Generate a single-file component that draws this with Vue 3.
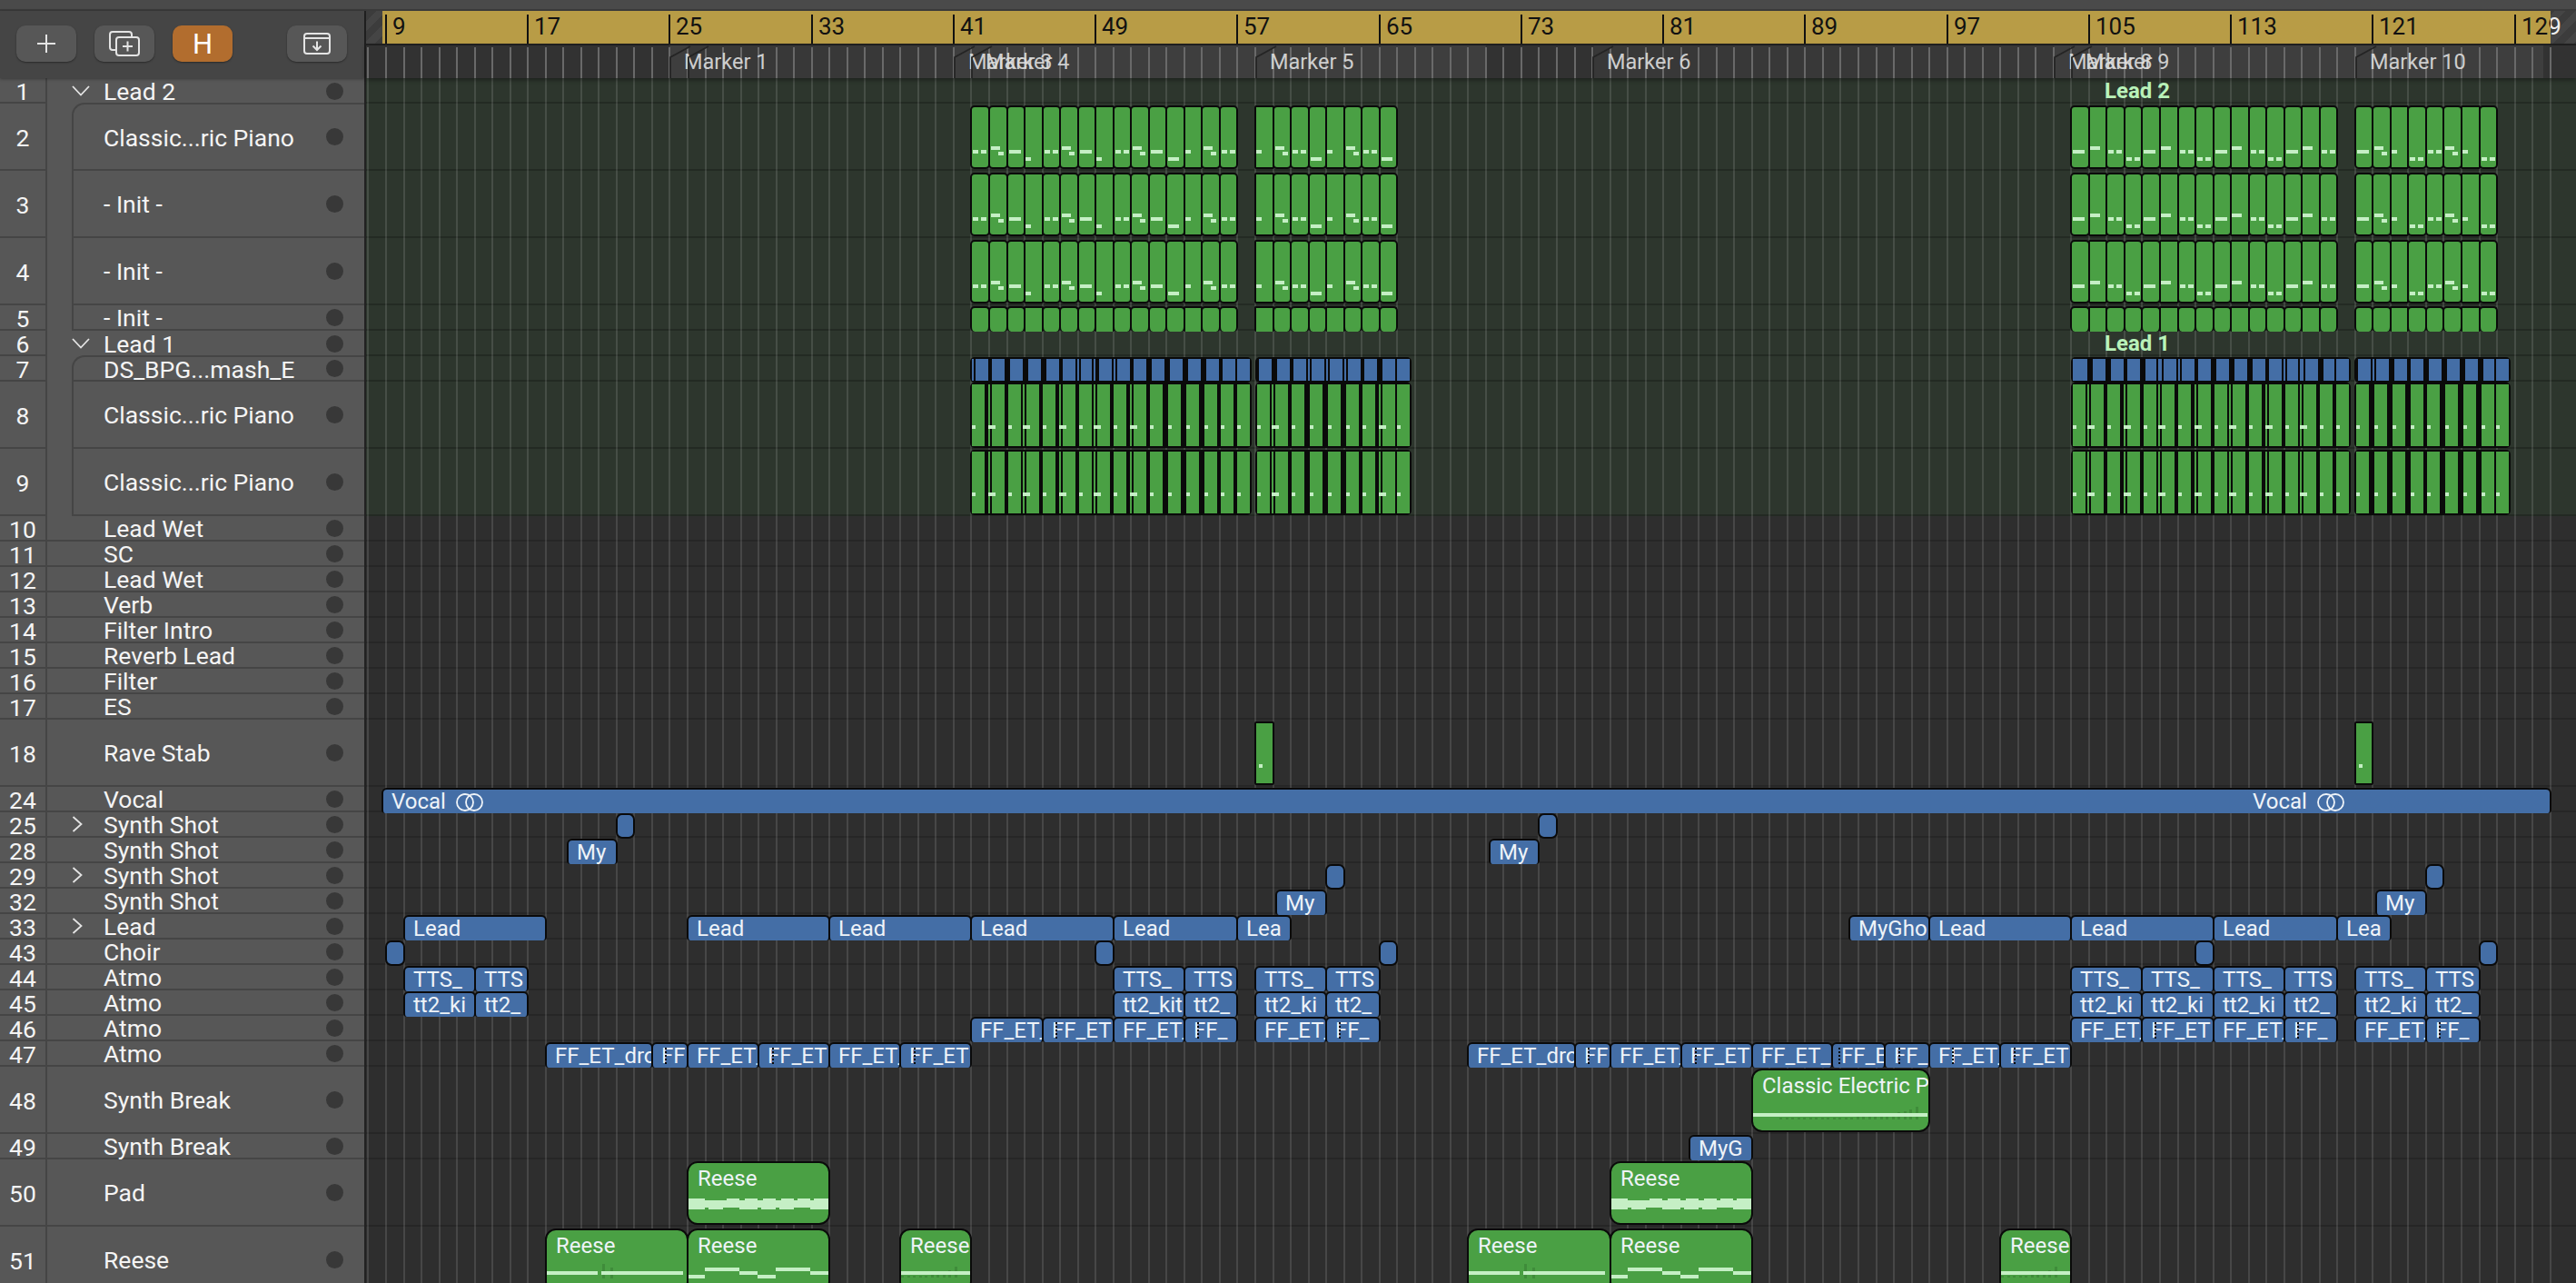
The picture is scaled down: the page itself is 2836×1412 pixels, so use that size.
<template>
  <div class="daw">
    <div class="topstrip"></div>
    <div class="main">
      <!-- track list -->
      <aside class="tracks">
        <div class="toolbar">
          <button class="tool">
            <svg width="22" height="22" viewBox="0 0 22 22"><path d="M11 1v20M1 11h20" class="ico" /></svg>
          </button>
          <button class="tool">
            <svg width="34" height="28" viewBox="0 0 34 28">
              <path d="M7 21H4a3 3 0 0 1-3-3V4a3 3 0 0 1 3-3h18a3 3 0 0 1 3 3v3" class="ico" />
              <rect x="8" y="7" width="25" height="20" rx="3" class="ico" />
              <path d="M20.500 11.500v11M15 17h11" class="ico" />
            </svg>
          </button>
          <button class="tool hide">H</button>
          <span class="toolgap"></span>
          <button class="tool">
            <svg width="30" height="24" viewBox="0 0 30 24">
              <rect x="1" y="1" width="28" height="22" rx="3" class="ico" />
              <path d="M1 6h28M15 9.500v9M10.500 14.500l4.500 4.500 4.500-4.500" class="ico" />
            </svg>
          </button>
        </div>
        <div
          v-for="t in tracks"
          :key="t.n"
          class="track"
          :class="{ big: t.h > 28 }"
        >
          <div class="num">{{ t.n }}</div>
          <div class="body" :class="t.kind">
            <div class="fold">
              <svg v-if="t.fold === 'open'" width="20" height="12" viewBox="0 0 20 12"><path d="M1 1l9 9.500L19 1" class="chev" /></svg>
              <svg v-if="t.fold === 'closed'" width="12" height="18" viewBox="0 0 12 18"><path d="M1.500 1l9 8-9 8" class="chev" /></svg>
            </div>
            <div class="name">{{ t.name }}</div>
            <div class="dot"></div>
          </div>
        </div>
      </aside>

      <section class="arrange">
        <!-- ruler -->
        <div class="ruler">
          <span class="barnum over" :style="{ left: X(129) + 7 - 403 + 'px' }">129</span>
          <div class="gold">
            <template v-for="b in rulerBars" :key="b">
              <i class="barline" :style="{ left: X(b) - 1 - 421 + 'px' }"></i>
              <span class="barnum" :style="{ left: X(b) + 7 - 421 + 'px' }">{{ b }}</span>
            </template>
          </div>
        </div>

        <!-- markers -->
        <div class="markers">
          <i
            v-for="s in markerSpans"
            :key="s[0]"
            class="mspan"
            :style="{ left: s[0] - 403 + 'px', width: s[1] - s[0] + 'px', background: s[2] }"
          ></i>
          <i v-for="b in gridBars" :key="b" class="tick" :style="{ left: X(b) - 1 - 403 + 'px' }"></i>
          <template v-for="m in markers" :key="m.b">
            <svg class="mflag" width="24" height="36" viewBox="0 0 24 36" :style="{ left: X(m.b) - 403 + 'px' }">
              <path d="M1 36V13L23 1" fill="none" stroke="#242424" stroke-width="1.800" />
            </svg>
            <span class="mname" :style="{ left: X(m.b) + 16 - 403 + 'px' }">{{ m.text }}</span>
          </template>
        </div>

        <!-- lanes with clips on top -->
        <div class="canvas">
          <div
            v-for="t in tracks"
            :key="t.n"
            class="lane"
            :class="{ tinted: t.n <= 9 }"
            :style="{ height: t.h + 'px' }"
          ></div>
          <i v-for="b in gridBars" :key="b" class="grid" :style="{ left: X(b) - 1 - 403 + 'px' }"></i>

          <span class="glabel" :style="{ left: 2317 - 403 + 'px', top: rowTop(1) + 'px' }">Lead 2</span>
          <span class="glabel" :style="{ left: 2317 - 403 + 'px', top: rowTop(6) + 'px' }">Lead 1</span>

          <!-- rows 7-9: packed loops read as black strips -->
          <div
            v-for="(s, i) in strips"
            :key="'s' + i"
            class="strip"
            :style="{ left: s.x - 403 + 'px', top: rowTop(s.n) + 1 + 'px', width: s.w + 'px', height: s.h + 'px' }"
          >
            <div
              v-for="(g, j) in s.segs"
              :key="j"
              class="seg"
              :style="{ left: g.x + 'px', width: g.w + 'px', background: s.color }"
            >
              <i v-if="s.note" class="snote"></i>
            </div>
          </div>

          <div
            v-for="(c, i) in clips"
            :key="i"
            class="clip"
            :class="[c.color, c.shape, { sq: c.sq }]"
            :style="{ left: c.x - 403 + 'px', top: c.y + 'px', width: c.w + 'px', height: c.h + 'px' }"
          >
            <i
              v-for="(k, j) in c.ticks"
              :key="'k' + j"
              class="cticks"
              :style="{ left: k.x + 'px', top: k.y + 'px', width: k.w + 'px', height: k.h + 'px' }"
            ></i>
            <i
              v-for="(n, j) in c.notes"
              :key="'n' + j"
              class="cnote"
              :style="{ left: n.x + 'px', top: n.y + 'px', width: n.w + 'px', height: n.h + 'px' }"
            ></i>
            <i v-if="c.dots !== undefined" class="cdots" :style="{ left: c.dots + 'px' }"></i>
            <span v-if="c.label" class="clabel">
              {{ c.label }}
              <svg v-if="c.loop" class="loop" width="30" height="20" viewBox="0 0 30 20">
                <circle cx="10" cy="10" r="9" /><circle cx="20" cy="10" r="9" />
              </svg>
            </span>
            <span v-if="c.loop" class="clabel second" :style="{ left: 2480 - c.x - 2 + 'px' }">
              {{ c.label }}
              <svg class="loop" width="30" height="20" viewBox="0 0 30 20">
                <circle cx="10" cy="10" r="9" /><circle cx="20" cy="10" r="9" />
              </svg>
            </span>
          </div>
        </div>
      </section>
    </div>
  </div>
</template>

<script setup>
const X = (bar) => Math.round(425 + 19.53 * (bar - 9))

const S = 28
const B = 74
const tracks = [
  { n: 1, name: 'Lead 2', h: S, kind: 'head', fold: 'open' },
  { n: 2, name: 'Classic...ric Piano', h: B, kind: 'inner first' },
  { n: 3, name: '- Init -', h: B, kind: 'inner' },
  { n: 4, name: '- Init -', h: B, kind: 'inner' },
  { n: 5, name: '- Init -', h: S, kind: 'inner' },
  { n: 6, name: 'Lead 1', h: S, kind: 'head', fold: 'open' },
  { n: 7, name: 'DS_BPG...mash_E', h: S, kind: 'inner first' },
  { n: 8, name: 'Classic...ric Piano', h: B, kind: 'inner' },
  { n: 9, name: 'Classic...ric Piano', h: B, kind: 'inner' },
  { n: 10, name: 'Lead Wet', h: S },
  { n: 11, name: 'SC', h: S },
  { n: 12, name: 'Lead Wet', h: S },
  { n: 13, name: 'Verb', h: S },
  { n: 14, name: 'Filter Intro', h: S },
  { n: 15, name: 'Reverb Lead', h: S },
  { n: 16, name: 'Filter', h: S },
  { n: 17, name: 'ES', h: S },
  { n: 18, name: 'Rave Stab', h: B },
  { n: 24, name: 'Vocal', h: S },
  { n: 25, name: 'Synth Shot', h: S, fold: 'closed' },
  { n: 28, name: 'Synth Shot', h: S },
  { n: 29, name: 'Synth Shot', h: S, fold: 'closed' },
  { n: 32, name: 'Synth Shot', h: S },
  { n: 33, name: 'Lead', h: S, fold: 'closed' },
  { n: 43, name: 'Choir', h: S },
  { n: 44, name: 'Atmo', h: S },
  { n: 45, name: 'Atmo', h: S },
  { n: 46, name: 'Atmo', h: S },
  { n: 47, name: 'Atmo', h: S },
  { n: 48, name: 'Synth Break', h: B },
  { n: 49, name: 'Synth Break', h: S },
  { n: 50, name: 'Pad', h: B },
  { n: 51, name: 'Reese', h: B },
]

const rowTop = (n) => {
  let y = 0
  for (const t of tracks) {
    if (t.n === n) return y
    y += t.h
  }
  return y
}

const rulerBars = []
for (let b = 9; b <= 129; b += 8) rulerBars.push(b)
const gridBars = []
for (let b = 8; b <= 131; b++) gridBars.push(b)

const markers = [
  { b: 25, text: 'Marker 1' },
  { b: 26, text: '' },
  { b: 41, text: 'Marker 3' },
  { b: 42, text: 'Marker 4' },
  { b: 58, text: 'Marker 5' },
  { b: 77, text: 'Marker 6' },
  { b: 103, text: 'Marker 8' },
  { b: 104, text: 'Marker 9' },
  { b: 120, text: 'Marker 10' },
]
const markerSpans = [
  [737, 757, '#3e3e3e'],
  [757, 1050, '#383838'],
  [1050, 1636, '#3e3e3e'],
  [1755, 2261, '#383838'],
  [2261, 2800, '#3e3e3e'],
]

// midi note shapes: [x, top in row, width]
const shapes = {
  a: [[2, 51, 6], [11, 51, 6]],
  b: [[2, 47, 10], [10, 53, 6]],
  c: [[2, 51, 13]],
  d: [[1, 59, 6]],
  e: [[2, 59, 12]],
  f: [[1, 51, 6]],
  g: [[1, 47, 11]],
  h: [[2, 59, 6], [11, 59, 6]],
}
const squared = 'dfg'

const clips = []
const addBlue = (n, from, to, label, extra = {}) => {
  const x = X(from) - 1
  clips.push({ x, w: X(to) - x + 1, y: rowTop(n) + 1, h: S, color: 'blue', shape: 'short', label, ...extra })
}
const addGreen = (n, from, to, label, extra = {}) => {
  const x = X(from) - 1
  clips.push({ x, w: X(to) - x + 1, y: rowTop(n) + 2, h: 70, color: 'green', shape: 'tall', label, ...extra })
}

// rows 2-5, one-bar loops
const loopRun = (start, pattern) => {
  ;[...pattern].forEach((p, i) => {
    for (const n of [2, 3, 4]) {
      addGreen(n, start + i, start + i + 1, '', {
        shape: 'loop1',
        sq: squared.includes(p),
        notes: shapes[p].map(([x, y, w]) => ({ x: x - 1, y: y - 4, w, h: 4 })),
      })
    }
    const x = X(start + i) - 1
    clips.push({ x, w: X(start + i + 1) - x + 1, y: rowTop(5) + 1, h: S, color: 'green', shape: 'loop1 short', sq: squared.includes(p) })
  })
}
loopRun(42, 'abcdabcdabcefba')
loopRun(58, 'fbaefbae')
loopRun(104, 'cgahcgahcgahcga')
loopRun(120, 'cbfhabfh')

// rows 7-9
const makeStrip = (n, base, from, to, list, color, note) => ({
  n,
  x: base + Math.round(from / 3),
  w: Math.round((to - from) / 3),
  h: note ? 72 : 28,
  color,
  note,
  segs: list.map(([a, b]) => ({ x: Math.round((a - from) / 3), w: Math.round((b - a) / 3) })),
})
const strips = []
const b1 = [[60, 66], [72, 114], [126, 168], [186, 228], [246, 288], [306, 348], [360, 402], [408, 414], [420, 456], [462, 468], [480, 522], [528, 534], [540, 582], [594, 636], [654, 696], [714, 756], [774, 816], [834, 876], [888, 930], [936, 978]]
const b2 = [[1008, 1050], [1068, 1110], [1122, 1164], [1170, 1176], [1182, 1224], [1230, 1236], [1242, 1284], [1290, 1296], [1302, 1344], [1356, 1398], [1416, 1458], [1464, 1506]]
const b3 = [[36, 84], [102, 144], [162, 204], [216, 258], [276, 312], [318, 330], [336, 378], [384, 390], [396, 438], [450, 492], [510, 552], [570, 612], [630, 672], [684, 726], [732, 738], [744, 780], [786, 798], [804, 846], [864, 900], [906, 948]]
const b4 = [[978, 1020], [1026, 1032], [1038, 1080], [1098, 1140], [1152, 1194], [1212, 1254], [1272, 1314], [1332, 1374], [1392, 1428], [1434, 1476]]
const g1 = [[60, 102], [114, 120], [126, 168], [180, 222], [228, 234], [240, 282], [294, 336], [348, 354], [360, 402], [414, 456], [462, 468], [474, 516], [528, 570], [582, 588], [594, 636], [648, 690], [708, 750], [768, 810], [828, 870], [882, 924], [936, 978]]
const g2 = [[1002, 1044], [1050, 1056], [1062, 1104], [1116, 1158], [1176, 1218], [1236, 1278], [1296, 1338], [1350, 1392], [1404, 1410], [1416, 1458], [1464, 1506]]
const g3 = [[36, 78], [84, 90], [96, 138], [150, 192], [204, 210], [216, 258], [270, 312], [318, 324], [330, 372], [384, 426], [438, 444], [450, 492], [504, 546], [552, 558], [564, 606], [618, 660], [672, 678], [684, 726], [738, 780], [786, 792], [798, 840], [852, 894], [906, 948]]
const g4 = [[972, 1014], [1032, 1074], [1092, 1134], [1152, 1194], [1206, 1248], [1266, 1308], [1326, 1368], [1386, 1428], [1434, 1476]]
const BLUE = '#446ea6'
const GREEN = '#4aa044'
strips.push(makeStrip(7, 1050, 55, 985, b1, BLUE, false), makeStrip(7, 1050, 997, 1512, b2, BLUE, false))
strips.push(makeStrip(7, 2270, 30, 954, b3, BLUE, false), makeStrip(7, 2270, 967, 1482, b4, BLUE, false))
for (const n of [8, 9]) {
  strips.push(makeStrip(n, 1050, 55, 985, g1, GREEN, true), makeStrip(n, 1050, 997, 1512, g2, GREEN, true))
  strips.push(makeStrip(n, 2270, 30, 954, g3, GREEN, true), makeStrip(n, 2270, 967, 1482, g4, GREEN, true))
}

// rave stabs
for (const b of [58, 120]) {
  addGreen(18, b, b + 1, '', { sq: true, notes: [{ x: 3, y: 45, w: 4, h: 4 }] })
}

// blue audio clips
addBlue(24, 8.8, 131, 'Vocal', { loop: true })
const plain = [
  [25, 22, 23], [25, 74, 75], [29, 62, 63], [29, 124, 125],
  [43, 9, 10], [43, 49, 50], [43, 65, 66], [43, 111, 112], [43, 127, 128],
]
plain.forEach(([n, a, b]) => addBlue(n, a, b, '', { shape: 'short round' }))
addBlue(28, 19.25, 22, 'My')
addBlue(28, 71.2, 74, 'My')
addBlue(32, 59.2, 62, 'My')
addBlue(32, 121.2, 124, 'My')
const leads = [[10, 18, 'Lead'], [26, 34, 'Lead'], [34, 42, 'Lead'], [42, 50, 'Lead'], [50, 57, 'Lead'], [57, 60, 'Lea'], [91.5, 96, 'MyGho'], [96, 104, 'Lead'], [104, 112, 'Lead'], [112, 119, 'Lead'], [119, 122, 'Lea']]
leads.forEach(([a, b, l]) => addBlue(33, a, b, l))

const tts = [[10, 14, 'TTS_', 'tt2_ki'], [14, 17, 'TTS', 'tt2_'], [50, 54, 'TTS_', 'tt2_kit'], [54, 57, 'TTS', 'tt2_'], [58, 62, 'TTS_', 'tt2_ki'], [62, 65, 'TTS', 'tt2_'], [104, 108, 'TTS_', 'tt2_ki'], [108, 112, 'TTS_', 'tt2_ki'], [112, 116, 'TTS_', 'tt2_ki'], [116, 119, 'TTS', 'tt2_'], [120, 124, 'TTS_', 'tt2_ki'], [124, 127, 'TTS', 'tt2_']]
tts.forEach(([a, b, l1, l2]) => {
  addBlue(44, a, b, l1)
  addBlue(45, a, b, l2)
})

const ff46 = [[42, 46, 'FF_ET_'], [46, 50, 'FF_ET', 13], [50, 54, 'FF_ET_'], [54, 57, 'FF_', 13], [58, 62, 'FF_ET_'], [62, 65, 'FF_', 13], [104, 108, 'FF_ET_'], [108, 112, 'FF_ET', 13], [112, 116, 'FF_ET_'], [116, 119, 'FF_', 13], [120, 124, 'FF_ET_'], [124, 127, 'FF_', 13]]
ff46.forEach(([a, b, l, d]) => addBlue(46, a, b, l, { dots: d }))
const ff47 = [[18, 24, 'FF_ET_dro'], [24, 26, 'FF', 13], [26, 30, 'FF_ET_'], [30, 34, 'FF_ET', 14], [34, 38, 'FF_ET_'], [38, 42, 'FF_ET', 14], [70, 76, 'FF_ET_dro'], [76, 78, 'FF', 13], [78, 82, 'FF_ET_'], [82, 86, 'FF_ET', 14], [86, 90.5, 'FF_ET_'], [90.5, 93.5, 'FF_E', 6], [93.5, 96, 'FF_', 14], [96, 100, 'FF_ET_', 24], [100, 104, 'FF_ET', 14]]
ff47.forEach(([a, b, l, d]) => addBlue(47, a, b, l, { dots: d }))
addBlue(49, 82.5, 86, 'MyG')

// green midi regions
const ramp = (start, end, base, grow) => {
  const out = []
  let i = 0
  for (let x = start; x <= end; x += 6.5) {
    const t = i / ((end - start) / 6.5)
    const h = Math.round(2 + Math.pow(t, grow) * 14)
    out.push({ x: Math.round(x), y: base - h, w: 3, h })
    i++
  }
  return out
}
// dense held chord: a centre band with bumps above and below
const stepped = () => {
  const out = [{ x: 0, y: 41, w: 154, h: 8 }]
  const top = [[0, 18], [42, 14], [62, 14], [82, 14], [102, 14], [120, 14], [138, 16]]
  const low = [[0, 18], [22, 16], [56, 20], [80, 16], [100, 16], [134, 20]]
  top.forEach(([x, w]) => out.push({ x, y: 39, w, h: 4 }))
  low.forEach(([x, w]) => out.push({ x, y: 47, w, h: 4 }))
  return out
}
const phrase = [[0, 49, 18], [18, 41, 38], [56, 45, 20], [76, 49, 20], [96, 41, 38], [134, 45, 20]].map(([x, y, w]) => ({ x, y, w, h: 4 }))
const held = () => ({
  notes: [{ x: 0, y: 45, w: 56, h: 4 }, { x: 60, y: 45, w: 90, h: 4 }],
  ticks: [{ x: 61, y: 37, w: 3, h: 16 }, { x: 70, y: 41, w: 3, h: 12 }],
})
addGreen(50, 26, 34, 'Reese', { notes: stepped() })
addGreen(50, 78, 86, 'Reese', { notes: stepped() })
addGreen(51, 18, 26, 'Reese', held())
addGreen(51, 70, 78, 'Reese', held())
addGreen(51, 26, 34, 'Reese', { notes: phrase })
addGreen(51, 78, 86, 'Reese', { notes: phrase })
const tail = () => ({
  notes: [{ x: 0, y: 45, w: 76, h: 4 }],
  ticks: ramp(0, 64, 52, 4),
})
addGreen(51, 38, 42, 'Reese', tail())
addGreen(51, 100, 104, 'Reese', tail())
addGreen(48, 86, 96, 'Classic Electric P', {
  notes: [{ x: 0, y: 47, w: 192, h: 4 }],
  ticks: ramp(29, 184, 54, 5),
})
</script>

<style>
html,
body {
  margin: 0;
  background: #2e2e2e;
}
</style>

<style scoped>
.daw {
  width: 2836px;
  height: 1412px;
  overflow: hidden;
  display: flex;
  flex-direction: column;
  background: #2e2e2e;
  font-family: Roboto, "Liberation Sans", sans-serif;
  font-size: 26.500px;
  color: #f4f4f4;
}
.topstrip {
  height: 10px;
  flex: none;
  background: #4a4a4a;
  border-bottom: 2px solid #3a3a3a;
}
.main {
  flex: 1;
  display: flex;
  min-height: 0;
}

/* track list */
.tracks {
  width: 403px;
  flex: none;
  background: #575757;
  border-right: 2px solid #222;
  box-sizing: border-box;
}
.toolbar {
  height: 74px;
  box-sizing: border-box;
  padding: 16px 0 0 18px;
  background: #454545;
  display: flex;
  gap: 20px;
  box-shadow: 0 1px 3px rgba(0, 0, 0, 0.35);
  position: relative;
}
.tool {
  width: 66px;
  height: 40px;
  padding: 0;
  border: 0;
  border-radius: 10px;
  background: #575757;
  box-shadow: 0 1px 2px rgba(0, 0, 0, 0.4);
  display: flex;
  align-items: center;
  justify-content: center;
  color: #fff;
}
.hide {
  background: #b26d2e;
  font-family: inherit;
  font-size: 31px;
  font-weight: 400;
}
.toolgap {
  width: 20px;
}
.ico {
  fill: none;
  stroke: #e4e4e4;
  stroke-width: 2;
}
.chev {
  fill: none;
  stroke: #e4e4e4;
  stroke-width: 1.800;
}
.track {
  display: flex;
  height: 28px;
  box-sizing: border-box;
}
.track.big {
  height: 74px;
}
.num {
  width: 52px;
  flex: none;
  box-sizing: border-box;
  border-bottom: 2px solid #454545;
  border-right: 2px solid #454545;
  display: flex;
  align-items: center;
  justify-content: center;
  padding-top: 2px;
}
.body {
  flex: 1;
  display: flex;
  align-items: center;
  min-width: 0;
  box-sizing: border-box;
  padding-right: 23px;
  border-bottom: 2px solid #454545;
}
.body.head {
  border-bottom: 0;
}
.body.inner {
  margin-left: 27px;
  border-left: 2px solid #454545;
}
.body.first {
  border-top: 2px solid #454545;
  border-top-left-radius: 14px;
  margin-top: -1px;
}
.fold {
  width: 62px;
  flex: none;
  display: flex;
  align-items: center;
  padding-left: 27px;
  box-sizing: border-box;
}
.inner .fold {
  width: 33px;
  padding: 0;
}
.fold svg {
  display: block;
}
.name {
  flex: 1;
  white-space: nowrap;
  line-height: 26px;
  padding-top: 2px;
}
.dot {
  width: 19px;
  height: 19px;
  flex: none;
  border-radius: 50%;
  background: #383838;
}

/* arrange area */
.arrange {
  flex: 1;
  min-width: 0;
  display: flex;
  flex-direction: column;
}
.ruler {
  height: 38px;
  flex: none;
  position: relative;
  box-sizing: border-box;
  border-bottom: 2px solid #222;
  background: repeating-linear-gradient(135deg, #3c3c3c 0 8px, #454545 8px 16px);
}
.gold {
  position: absolute;
  left: 18px;
  top: 0;
  bottom: 0;
  width: 2387px;
  overflow: hidden;
  background: #b89c46;
}
.barline {
  position: absolute;
  top: 4px;
  bottom: 0;
  width: 2px;
  background: #111;
}
.barnum {
  position: absolute;
  top: 2px;
  line-height: 30px;
  font-size: 26px;
  color: #111;
}
.barnum.over {
  color: #eee;
}
.markers {
  height: 36px;
  flex: none;
  position: relative;
  background: #323232;
  box-shadow: 0 2px 5px rgba(0, 0, 0, 0.4);
  z-index: 2;
  overflow: hidden;
}
.mspan {
  position: absolute;
  top: 0;
  bottom: 0;
}
.tick {
  position: absolute;
  top: 2px;
  bottom: 0;
  width: 2px;
  background: #696969;
}
.mflag {
  position: absolute;
  top: 0;
}
.mname {
  position: absolute;
  top: 5px;
  line-height: 26px;
  font-size: 23.500px;
  color: #dedede;
  white-space: nowrap;
  opacity: 0.9;
}
.canvas {
  flex: 1;
  position: relative;
  min-height: 0;
  background: #2e2e2e;
}
.lane {
  box-sizing: border-box;
  border-bottom: 2px solid #262626;
}
.lane.tinted {
  background: #2d362d;
  border-bottom-color: #232a23;
}
.grid {
  position: absolute;
  top: 0;
  height: 1326px;
  width: 2px;
  background: rgba(255, 255, 255, 0.12);
}
.glabel {
  position: absolute;
  line-height: 28px;
  font-size: 24px;
  font-weight: 700;
  color: #b9f2b9;
}
.strip {
  position: absolute;
  background: #0a0a0a;
  border-radius: 5px;
  overflow: hidden;
}
.seg {
  position: absolute;
  top: 2px;
  bottom: 2px;
}
.snote {
  position: absolute;
  left: 0;
  top: 45px;
  width: 4px;
  height: 4px;
  background: #c5efc5;
}
.clip {
  position: absolute;
  box-sizing: border-box;
  border: 2px solid #0a0a0a;
  overflow: hidden;
}
.clip.blue {
  background: #446ea6;
}
.clip.green {
  background: #4aa044;
}
.short {
  border-bottom: 0;
  border-radius: 6px 6px 4px 4px;
}
.short.round {
  border-bottom: 2px solid #0a0a0a;
  border-radius: 7px;
}
.tall {
  border-radius: 12px;
}
.loop1 {
  border-radius: 5px;
}
.clip.sq {
  border-radius: 2px;
}
.clabel {
  position: absolute;
  left: 9px;
  top: 0;
  line-height: 26px;
  font-size: 24px;
  color: #eef3f8;
  white-space: nowrap;
}
.tall .clabel {
  left: 10px;
  top: 4px;
}
.loop {
  vertical-align: -3px;
  margin-left: 5px;
  fill: none;
  stroke: #eef3f8;
  stroke-width: 1.800;
}
.cnote {
  position: absolute;
  background: #c5efc5;
}
.cticks {
  position: absolute;
  background: #3f8c3a;
}
.cdots {
  position: absolute;
  top: 4px;
  height: 18px;
  border-left: 2px dotted #0a0a0a;
  z-index: 1;
}
</style>
